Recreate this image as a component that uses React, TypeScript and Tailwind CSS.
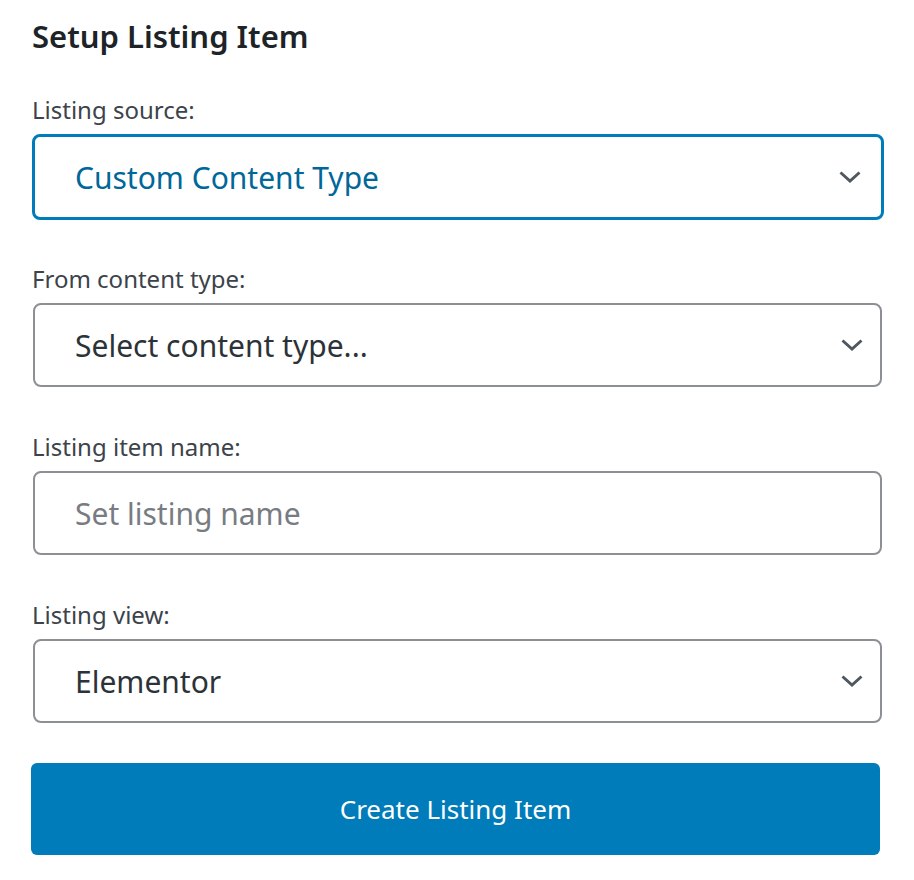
import React from "react";

const Chevron = () => (
  <svg width="24" height="16" viewBox="0 0 24 16" className="shrink-0">
    <path d="M2.5 3.5 L12 12 L21.5 3.5" fill="none" stroke="#50575e" strokeWidth="3" />
  </svg>
);

const font = { fontFamily: '"Noto Sans", "Open Sans", sans-serif' };

export default function App() {
  return (
    <div className="bg-white w-[914px] h-[880px] pl-[32px] pt-[14px]" style={font}>
      <h1 className="text-[31px] font-semibold text-[#1d2327] leading-[44px]">Setup Listing Item</h1>
      <div className="w-[852px] mt-[37px] flex flex-col">
        <label className="text-[24px] text-[#3c434a] leading-[30px] h-[30px]">Listing source:</label>
        <div className="mt-[9px] h-[86px] border-[3px] border-[#007cba] rounded-lg flex items-center justify-between pl-[40px] pr-[19px]">
          <span className="text-[30px] text-[#006799]">Custom Content Type</span>
          <Chevron />
        </div>
        <label className="text-[24px] text-[#3c434a] leading-[30px] h-[30px] mt-[44px]">From content type:</label>
        <div className="mt-[9px] ml-px w-[849px] h-[84px] border-2 border-[#8c8f94] rounded-lg flex items-center justify-between pl-[40px] pr-[16px]">
          <span className="text-[30px] text-[#2c3338]">Select content type...</span>
          <Chevron />
        </div>
        <label className="text-[24px] text-[#3c434a] leading-[30px] h-[30px] mt-[45px]">Listing item name:</label>
        <div className="mt-[9px] ml-px w-[849px] h-[84px] border-2 border-[#8c8f94] rounded-lg flex items-center pl-[40px]">
          <span className="text-[30px] text-[#787c82]">Set listing name</span>
        </div>
        <label className="text-[24px] text-[#3c434a] leading-[30px] h-[30px] mt-[45px]">Listing view:</label>
        <div className="mt-[9px] ml-px w-[849px] h-[84px] border-2 border-[#8c8f94] rounded-lg flex items-center justify-between pl-[40px] pr-[16px]">
          <span className="text-[30px] text-[#2c3338]">Elementor</span>
          <Chevron />
        </div>
        <button className="mt-[40px] -ml-[1px] w-[849px] h-[92px] bg-[#007cba] rounded-md text-white text-[26px]">Create Listing Item</button>
      </div>
    </div>
  );
}
